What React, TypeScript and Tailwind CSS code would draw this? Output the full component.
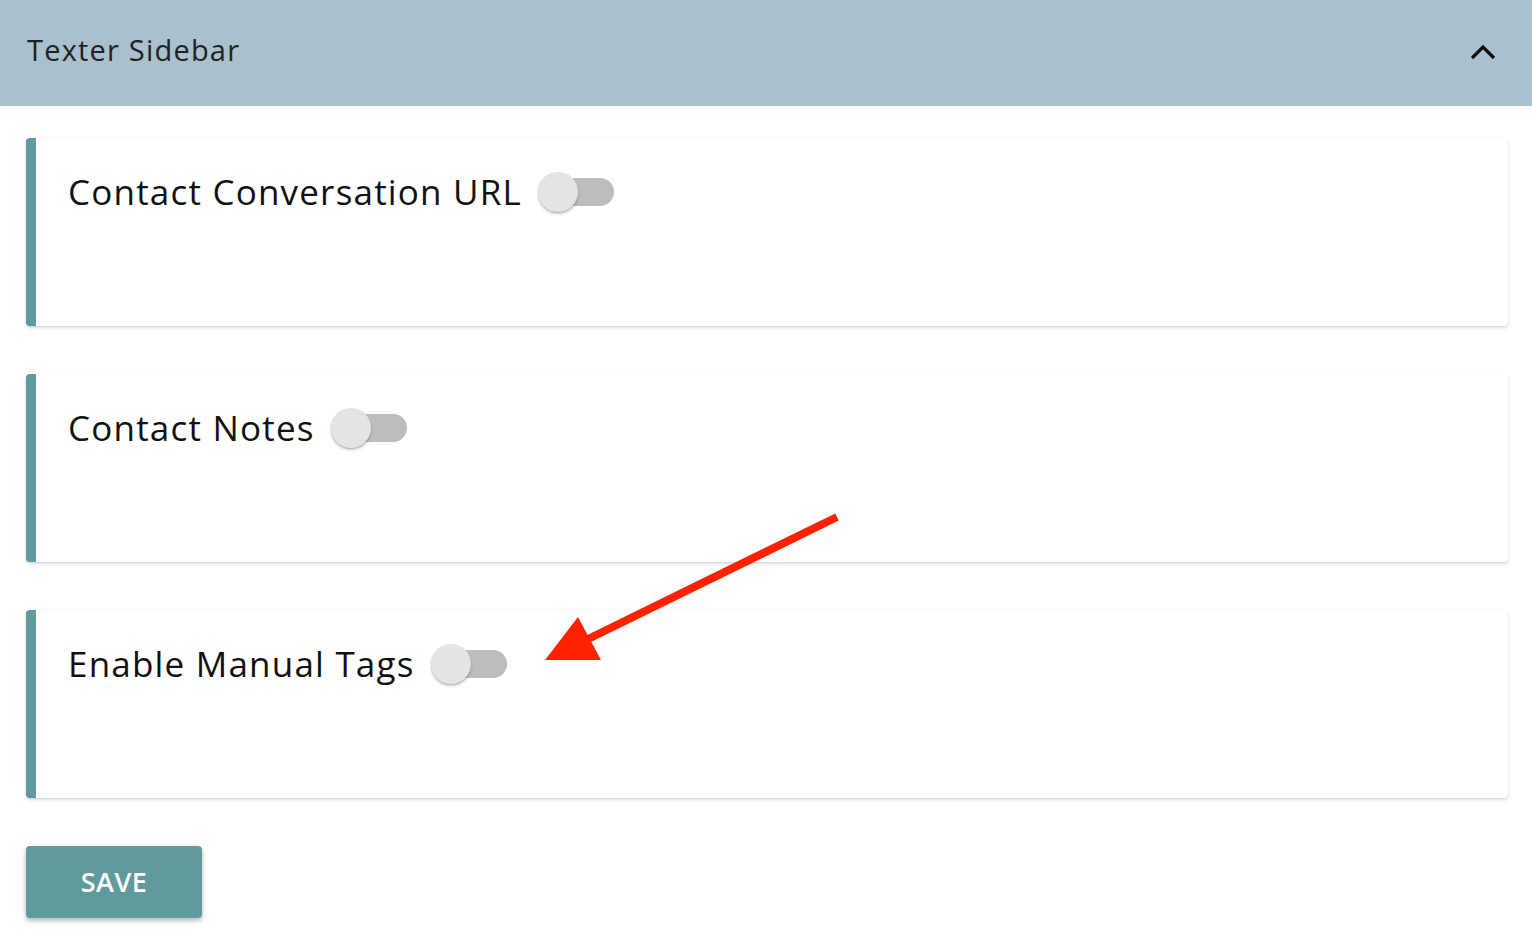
import React from "react";

function Toggle() {
  return (
    <span className="relative inline-block w-[80px] h-[40px] shrink-0">
      <span className="absolute left-[8px] top-[6px] w-[68px] h-[28px] rounded-full bg-[#bdbdbd]" />
      <span className="absolute left-0 top-0 w-[40px] h-[40px] rounded-full bg-[#e4e4e4] shadow-[0_2px_3px_rgba(0,0,0,0.2),0_1px_1px_rgba(0,0,0,0.14)]" />
    </span>
  );
}

function Card({ label }: { label: string }) {
  return (
    <div className="h-[188px] bg-white rounded-[4px] border-l-[10px] border-[#5f9a9c] shadow-[0_2px_4px_rgba(0,0,0,0.12),0_1px_2px_rgba(0,0,0,0.08)] pl-[32px] pt-[30px]">
      <div className="flex items-center gap-[16px]">
        <span className="text-[35px] leading-[48px] text-[#111] tracking-[1.2px]">{label}</span>
        <Toggle />
      </div>
    </div>
  );
}

export default function App() {
  return (
    <div
      className="relative w-[1532px] h-[948px] bg-white overflow-hidden"
      style={{ fontFamily: "'Open Sans', 'Noto Sans', sans-serif" }}
    >
      <div className="h-[106px] bg-[#a9c0ce] flex items-center justify-between pl-[27px] pr-[36px] pb-[8px]">
        <span className="text-[29px] text-[#222] leading-none tracking-[1.2px]">Texter Sidebar</span>
        <svg width="26" height="18" viewBox="0 0 26 18" className="mt-[6px]">
          <path d="M2 15 L13 4 L24 15" fill="none" stroke="#111" strokeWidth="3.2" />
        </svg>
      </div>
      <div className="px-[24px] pt-[32px] flex flex-col gap-[48px] pl-[26px]">
        <Card label="Contact Conversation URL" />
        <Card label="Contact Notes" />
        <Card label="Enable Manual Tags" />
      </div>
      <div className="pl-[26px] pt-[48px]">
        <button className="w-[176px] h-[72px] bg-[#5f9a9c] rounded-[4px] text-white text-[27px] font-semibold tracking-[0.5px] shadow-[0_3px_4px_rgba(0,0,0,0.2),0_1px_8px_rgba(0,0,0,0.1)]">
          SAVE
        </button>
      </div>
      <svg className="absolute left-0 top-0 pointer-events-none" width="1532" height="948">
        <line x1="837" y1="517" x2="584" y2="641" stroke="#ff2200" strokeWidth="8" />
        <polygon points="545,660 578,617 601,660" fill="#ff2200" />
      </svg>
    </div>
  );
}
